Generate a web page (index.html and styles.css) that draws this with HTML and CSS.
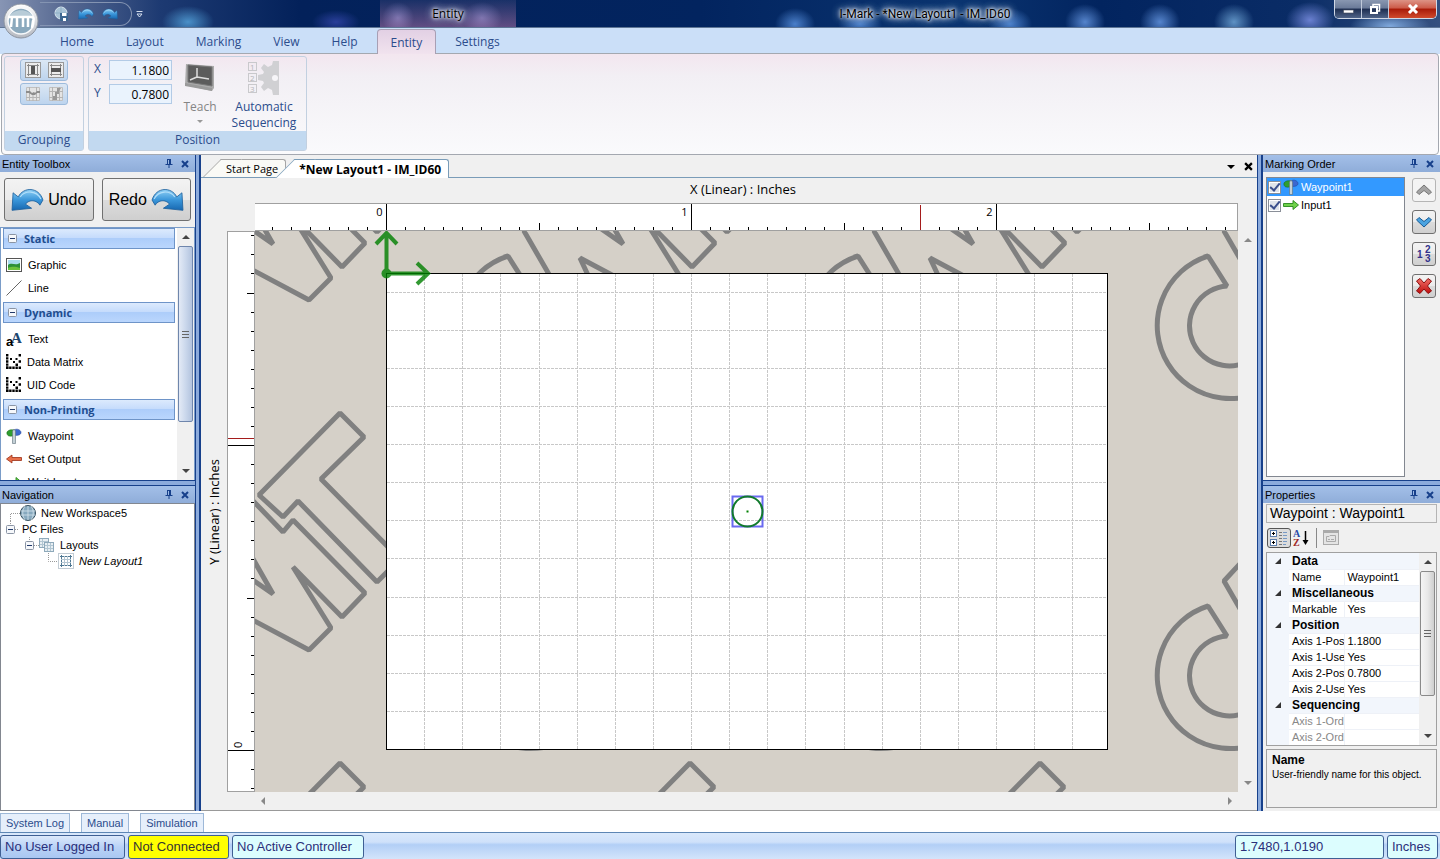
FILE: index.html
```html
<!DOCTYPE html>
<html lang="en">
<head>
  <meta charset="UTF-8" />
  <meta name="viewport" content="width=device-width, initial-scale=1.0" />
  <title>I-Mark - *New Layout1 - IM_ID60</title>
  <link rel="stylesheet" href="styles.css">
</head>
<body>
  <!-- shared icons -->
  <svg class="defs" aria-hidden="true">
    <defs>
      <linearGradient id="blueArrow" x1="0" y1="0" x2="0" y2="1">
        <stop offset="0" stop-color="#8fd0f5" />
        <stop offset="0.5" stop-color="#3a96da" />
        <stop offset="1" stop-color="#1767b0" />
      </linearGradient>
      <linearGradient id="silver" x1="0" y1="0" x2="0" y2="1">
        <stop offset="0" stop-color="#ffffff" />
        <stop offset="1" stop-color="#b4b8c0" />
      </linearGradient>
      <linearGradient id="redX" x1="0" y1="0" x2="0" y2="1">
        <stop offset="0" stop-color="#f07068" />
        <stop offset="1" stop-color="#c00c0c" />
      </linearGradient>
    </defs>
    <symbol id="i-undo" viewBox="0 0 32 24">
      <path d="M1 22 L2 5 L7 9 C12 -1 27 -1 31 12 L28 17 C25 12 18 11 14 16 L20 20 Z" fill="url(#blueArrow)" stroke="#1c5f9c" stroke-width="0.8" />
      <path d="M9 9 C14 2 25 3 29 11" fill="none" stroke="#b5e0fa" />
    </symbol>
    <symbol id="i-redo" viewBox="0 0 32 24">
      <path d="M31 22 L30 5 L25 9 C20 -1 5 -1 1 12 L4 17 C7 12 14 11 18 16 L12 20 Z" fill="url(#blueArrow)" stroke="#1c5f9c" stroke-width="0.8" />
      <path d="M23 9 C18 2 7 3 3 11" fill="none" stroke="#b5e0fa" />
    </symbol>
    <symbol id="i-pin" viewBox="0 0 8 9">
      <path d="M2.5 0.5 V5 M2 0.5 H6 M5.5 0.5 V5 M4.5 1 V5 M0.5 5.5 H7.5 M4 6 V9" fill="none" stroke="#17408b" />
    </symbol>
    <symbol id="i-close" viewBox="0 0 8 8">
      <path d="M1 1 L7 7 M7 1 L1 7" fill="none" stroke="currentColor" stroke-width="2" />
    </symbol>
    <symbol id="i-minus" viewBox="0 0 9 9">
      <rect x="0.5" y="0.5" width="8" height="8" rx="1" fill="#f6f8fb" stroke="#8a94a4" />
      <path d="M2 4.5 H7" stroke="#223a6b" />
    </symbol>
    <symbol id="i-waypoint" viewBox="0 0 16 16">
      <path d="M1 6 C0 3 4 1 8 2 V8 C5 8 2 9 1 6 Z" fill="#2f9e2f" stroke="#176117" stroke-width="0.5" />
      <path d="M8 2 C11 0 15 2 15 4.5 C15 7 11 8 8 7 Z" fill="#3c68cf" stroke="#1d3c8e" stroke-width="0.5" />
      <path d="M6.5 3 L8 1 L9.5 3 V15.5 H6.5 Z" fill="#c3d0d6" stroke="#5e7078" stroke-width="0.6" />
    </symbol>
    <symbol id="i-output" viewBox="0 0 16 16">
      <path d="M0.5 8 L6 4 V6.5 H15.5 V9.5 H6 V12 Z" fill="#e8704a" stroke="#9c2f14" stroke-width="0.8" />
    </symbol>
    <symbol id="i-input" viewBox="0 0 16 16">
      <path d="M15.5 8 L10 3.5 V6.5 H0.5 V9.5 H10 V12.5 Z" fill="#6fd24a" stroke="#27871d" stroke-width="0.9" />
    </symbol>
    <symbol id="i-matrix" viewBox="0 0 15 15">
      <path d="M1.2 0 V15" stroke="#000" stroke-width="2.4" stroke-dasharray="2.4 0.75" />
      <path d="M0 13.8 H15" stroke="#000" stroke-width="2.4" stroke-dasharray="2.4 0.75" />
      <path d="M4 4 H6 V6 H4 Z M7 7 H9 V9 H7 Z M9.5 9.5 H12 V12 H9.5 Z M12.6 0 H15 V2.400 H12.600 Z M12.600 6.300 H15 V8.700 H12.600 Z M9.500 4 H11.500 V6 H9.500 Z" />
    </symbol>
    <symbol id="i-grid" viewBox="0 0 16 16">
      <rect x="0.5" y="0.5" width="15" height="15" fill="#fff" stroke="#c2ccd4" />
      <path d="M3.5 2 V14 M12.5 2 V14 M2 3.5 H14 M2 12.5 H14" stroke="#4f7893" />
      <path d="M6.5 3 V13 M9.5 3 V13 M3 6.5 H13 M3 9.5 H13" stroke="#b4c6d2" />
    </symbol>
  </svg>

  <header class="titlebar">
    <button class="office-button" aria-label="Application menu">
      <svg width="36" height="36" viewBox="0 0 36 36">
        <circle cx="18" cy="18" r="17" fill="url(#silver)" stroke="#8b93a0" />
        <circle cx="18" cy="18" r="13" fill="#8ba9bd" stroke="#f7f9fb" stroke-width="1.5" />
        <path d="M6 14 C10 5 26 5 30 14" fill="#b8ccd8" />
        <path d="M5 14 H28 C31 14 31 16 30 18 L29 25 M9 14 L8 24 M14 14 V24 M20 14 V24 M25 14 V24" fill="none" stroke="#fff" stroke-width="2.5" />
      </svg>
    </button>
    <div class="quick-access">
      <button aria-label="Save"><svg width="16" height="16" viewBox="0 0 16 16"><circle cx="7" cy="7" r="6" fill="#a9c3d6" stroke="#d8e6f0" /><path d="M1 7 H13 M7 1 V13" stroke="#8fb0c6" fill="none" /><path d="M6 7 H14 V15 H6 Z" fill="#3e6790" /><path d="M8 7 H12.500 V10 H8 Z M9 12 H12 V15 H9 Z" fill="#fff" /></svg></button>
      <button aria-label="Undo"><svg width="16" height="14"><use href="#i-undo" /></svg></button>
      <button aria-label="Redo"><svg width="16" height="14"><use href="#i-redo" /></svg></button>
    </div>
    <button class="qa-more" aria-label="Customize"><svg width="7" height="8" viewBox="0 0 7 8"><path d="M0.5 1.5 H6.5 M1 4 H6 L3.5 7 Z" fill="none" stroke="#d5dfee" /></svg></button>
    <span class="context-title">Entity</span>
    <span class="window-title">I-Mark - *New Layout1 - IM_ID60</span>
    <div class="window-buttons">
      <button aria-label="Minimize"><svg width="11" height="10" viewBox="0 0 11 10"><rect x="0.5" y="6" width="10" height="3" fill="#fff" stroke="#444c5c" stroke-width="0.6" /></svg></button>
      <button aria-label="Restore"><svg width="12" height="12" viewBox="0 0 12 12"><path d="M4 3 V1.5 H10.5 V8 H9" fill="none" stroke="#fff" stroke-width="1.5" /><rect x="2" y="4" width="6" height="6" fill="none" stroke="#fff" stroke-width="2" /></svg></button>
      <button class="close" aria-label="Close"><svg width="12" height="10" viewBox="0 0 12 10"><path d="M2 1 L10 9 M10 1 L2 9" stroke="#fff" stroke-width="3" /></svg></button>
    </div>
  </header>

  <nav class="ribbon-tabs">
    <button>Home</button>
    <button>Layout</button>
    <button>Marking</button>
    <button>View</button>
    <button>Help</button>
    <button class="active">Entity</button>
    <button>Settings</button>
  </nav>

  <section class="ribbon">
    <div class="group grouping">
      <div class="group-body">
        <div class="button-pair">
          <button aria-label="Group columns"><svg width="16" height="16" viewBox="0 0 16 16"><rect x="0.5" y="0.5" width="15" height="15" fill="#ececec" stroke="#999" /><path d="M3.5 2 V14 M12.5 2 V14 M2 3.5 H14 M2 12.5 H14" stroke="#888" /><rect x="6" y="4" width="4" height="8" fill="#555" /></svg></button>
          <button aria-label="Group rows"><svg width="16" height="16" viewBox="0 0 16 16"><rect x="0.5" y="0.5" width="15" height="15" fill="#ececec" stroke="#999" /><path d="M3.5 2 V14 M12.5 2 V14 M2 3.5 H14 M2 12.5 H14" stroke="#888" /><rect x="3" y="6" width="10" height="4" fill="#555" /></svg></button>
        </div>
        <div class="button-pair">
          <button aria-label="Ungroup rows"><svg width="14" height="14" viewBox="0 0 14 14"><path d="M0.500 0.500 H13.500 V13.500 H0.500 Z" fill="#e4e4e4" stroke="#c0c0c0" /><path d="M3.5 0 V14 M7 7 V14 M10.500 0 V14 M0 10.500 H14" stroke="#b4b4b4" /><path d="M0 4 H4 L6 6 L8 5 L9 6 L11 4 H14 V6 H11 L9 8 H6 L3 6 H0 Z" fill="#8c8c8c" /></svg></button>
          <button aria-label="Ungroup columns"><svg width="14" height="14" viewBox="0 0 14 14"><path d="M0.500 0.500 H13.500 V13.500 H0.500 Z" fill="#e4e4e4" stroke="#c0c0c0" /><path d="M3.5 0 V14 M10.5 0 V14 M0 4.5 H14 M0 10.5 H14" stroke="#b4b4b4" /><path d="M8 1 H12 L10 4 V7 H8 V13 H4 V9 H6 V5 H8 Z" fill="#999" /></svg></button>
        </div>
      </div>
      <div class="group-label">Grouping</div>
    </div>
    <div class="group position">
      <div class="group-body">
        <div class="coords">
          <label for="posX">X</label><input type="text" id="posX" value="1.1800">
          <label for="posY">Y</label><input type="text" id="posY" value="0.7800">
        </div>
        <button class="big disabled">
          <svg width="32" height="32" viewBox="0 0 32 32"><path d="M2 2 L30 4 V26 L28 29 L1 23 Z" fill="#aaa" /><path d="M4 3 L28 5 V24 L4 20 Z" fill="#5c5c5c" stroke="#777" /><path d="M13 6 V15 L6 18 M13 15 L25 17" stroke="#ddd" fill="none" stroke-width="1.5" /><path d="M1 21 L28 26 V29 L1 24 Z" fill="#9a9a9a" /></svg>
          <span>Teach</span>
          <i class="arrow"></i>
        </button>
        <button class="big">
          <svg width="32" height="34" viewBox="0 0 32 34">
            <g fill="none" stroke="#c9c9cc"><rect x="0.5" y="1.5" width="8" height="8" /><rect x="0.5" y="12.5" width="8" height="8" /><rect x="0.5" y="23.5" width="8" height="8" /></g>
            <g class="seq-num"><text x="2" y="9">1</text><text x="2" y="20">2</text><text x="2" y="31">3</text></g>
            <path d="M31 0 V34 H25 L24 29 L20 27 L16 30 L13 26 L16 22 L15 20 L10 19 V14 L15 13 L16 11 L13 7 L16 3 L20 6 L24 4 L25 0 Z" fill="#d0d0d3" /><circle cx="27" cy="17" r="3" fill="#f6f5f8" />
          </svg>
          <span>Automatic<br>Sequencing</span>
        </button>
      </div>
      <div class="group-label">Position</div>
    </div>
  </section>

  <main class="workspace">
    <aside class="dock left">
      <section class="panel toolbox">
        <div class="panel-head"><h2>Entity Toolbox</h2><button aria-label="Pin"><svg width="8" height="9"><use href="#i-pin" /></svg></button><button aria-label="Close"><svg width="8" height="8"><use href="#i-close" /></svg></button></div>
        <div class="history">
          <button><svg width="33" height="26"><use href="#i-undo" /></svg>Undo</button>
          <button>Redo<svg width="33" height="26"><use href="#i-redo" /></svg></button>
        </div>
        <div class="tool-box">
          <div class="tool-list">
            <h3><svg width="9" height="9"><use href="#i-minus" /></svg>Static</h3>
            <ul>
              <li><svg width="16" height="14" viewBox="0 0 16 14"><rect x="0.5" y="0.5" width="15" height="13" fill="#fff" stroke="#555" /><rect x="2" y="2" width="12" height="5" fill="#a9dcef" /><path d="M2 7 C6 4 9 8 14 5 V12 H2 Z" fill="#2c9038" /><path d="M2 10 C7 8 10 9 14 10 V12 H2 Z" fill="#6cc23c" /></svg>Graphic</li>
              <li><svg width="16" height="16" viewBox="0 0 16 16"><path d="M0.5 15.5 L15.5 0.5" stroke="#666" /></svg>Line</li>
            </ul>
            <h3><svg width="9" height="9"><use href="#i-minus" /></svg>Dynamic</h3>
            <ul>
              <li><svg width="16" height="16" viewBox="0 0 16 16"><text class="big-a" x="5" y="12">A</text><text class="small-a" x="0" y="15">a</text></svg>Text</li>
              <li><svg width="15" height="15"><use href="#i-matrix" /></svg>Data Matrix</li>
              <li><svg width="15" height="15"><use href="#i-matrix" /></svg>UID Code</li>
            </ul>
            <h3><svg width="9" height="9"><use href="#i-minus" /></svg>Non-Printing</h3>
            <ul>
              <li><svg width="16" height="16"><use href="#i-waypoint" /></svg>Waypoint</li>
              <li><svg width="16" height="16"><use href="#i-output" /></svg>Set Output</li>
              <li><svg width="16" height="16"><use href="#i-input" /></svg>Wait Input</li>
            </ul>
          </div>
          <div class="scrollbar blue"><i class="up"></i><div class="thumb"></div><i class="down"></i></div>
        </div>
      </section>

      <section class="panel navigation">
        <div class="panel-head"><h2>Navigation</h2><button aria-label="Pin"><svg width="8" height="9"><use href="#i-pin" /></svg></button><button aria-label="Close"><svg width="8" height="8"><use href="#i-close" /></svg></button></div>
        <ul class="tree">
          <li><svg width="36" height="16" viewBox="0 0 36 16"><path d="M9.5 16 V8.5 H19" fill="none" stroke="#999" stroke-dasharray="1 1" /><circle cx="27" cy="8" r="7.5" fill="#87a9be" stroke="#37505f" /><path d="M20 6 H34 M20 10 H34 M27 1 V15 M24 1 C21 5 21 11 24 15 M30 1 C33 5 33 11 30 15" fill="none" stroke="#d5e5ee" stroke-width="0.8" /></svg>New Workspace5</li>
          <li><svg width="17" height="16" viewBox="0 0 17 16"><path d="M9.5 0 V4 M14 8.500 H17" stroke="#999" stroke-dasharray="1 1" /><use href="#i-minus" x="5" y="4" width="9" height="9" /></svg>PC Files</li>
          <li><svg width="55" height="16" viewBox="0 0 55 16"><path d="M28.5 0 V4 M33 8.5 H39" stroke="#999" stroke-dasharray="1 1" /><use href="#i-minus" x="24" y="4" width="9" height="9" /><g fill="#e8eff3" stroke="#8ea9ba"><rect x="38.5" y="1.5" width="9" height="9" /><rect x="43.5" y="5.5" width="9" height="9" /></g><path d="M46.5 6 V14 M49.5 6 V14 M44 8.5 H52 M44 11.5 H52 M41.500 2 V10 M39 4.5 H47 M39 7.5 H43" stroke="#b2c6d2" /></svg>Layouts</li>
          <li class="current"><svg width="73" height="16" viewBox="0 0 73 16"><path d="M47.5 0 V8.5 H57" fill="none" stroke="#999" stroke-dasharray="1 1" /><use href="#i-grid" x="57" y="0" width="16" height="16" /></svg>New Layout1</li>
        </ul>
      </section>
    </aside>

    <div class="splitter"></div>

    <section class="document">
      <div class="doc-tabs">
        <button class="doc-tab">Start Page</button>
        <button class="doc-tab active">*New Layout1 - IM_ID60</button>
        <button class="doc-menu" aria-label="Open documents"><i class="arrow"></i></button>
        <button class="doc-close" aria-label="Close document"><svg width="9" height="9"><use href="#i-close" /></svg></button>
      </div>
      <div class="doc-body">
        <div class="axis-x">X (Linear) : Inches</div>
        <div class="axis-y"><span>Y (Linear) : Inches</span></div>
        <svg class="ruler-x" id="rulerX"></svg>
        <svg class="ruler-y" id="rulerY"></svg>
        <svg class="canvas" id="canvas">
          <defs>
            <g id="mark" class="mark">
              <path d="M85 182 L109 206 L66 248 L145 328 L122 351 L43 270 L28 286 L4 264 Z" />
              <path d="M-20 251 L28 301 L38 289 L110 362 L87 386 L38 336 L76 397 L54 419 L-25 377 L-5 420" />
              <path d="M-15 305 L18 363 L-25 333" />
              <path d="M-97 375 A73 73 0 1 0 -23 496 L-47 473 A40 40 0 1 1 -78 405 Z" />
              <path d="M-45 311 L-81 350 L-40 421" />
            </g>
          </defs>
          <g id="marks"></g>
          <rect class="sheet" x="131.5" y="42.5" width="721" height="476" />
          <g id="grid" class="grid"></g>
          <g class="origin">
            <path d="M131.5 42.5 V3 M121 13 L131.5 2 L142 13" />
            <path d="M131.5 42.5 H171 M162 32 L173 42.5 L162 53" />
            <circle cx="131.5" cy="42.5" r="5" />
          </g>
          <rect class="selection" x="477.5" y="265.5" width="30" height="30" />
          <circle class="waypoint" cx="492.5" cy="280.5" r="15" />
          <rect x="492" y="280" width="1" height="1" fill="#008000" stroke="#008000" />
        </svg>
        <div class="scroll-v"><i class="up"></i><i class="down"></i></div>
        <div class="scroll-h"><i class="prev"></i><i class="next"></i></div>
      </div>
    </section>

    <div class="splitter"></div>

    <aside class="dock right">
      <section class="panel marking">
        <div class="panel-head"><h2>Marking Order</h2><button aria-label="Pin"><svg width="8" height="9"><use href="#i-pin" /></svg></button><button aria-label="Close"><svg width="8" height="8"><use href="#i-close" /></svg></button></div>
        <div class="marking-body">
          <div class="order-list">
            <label class="selected"><input type="checkbox" checked><svg width="16" height="16"><use href="#i-waypoint" /></svg>Waypoint1</label>
            <label><input type="checkbox" checked><svg width="16" height="16"><use href="#i-input" /></svg>Input1</label>
          </div>
          <div class="order-buttons">
            <button class="off" aria-label="Move up"><svg width="18" height="18" viewBox="0 0 18 18"><path d="M1.500 11 L9 4 L16.500 11 L14 13.500 L9 9.500 L4 13.500 Z" fill="#a4a4a4" stroke="#777" /></svg></button>
            <button aria-label="Move down"><svg width="18" height="18" viewBox="0 0 18 18"><path d="M1.500 7 L4 4.500 L9 8.500 L14 4.500 L16.500 7 L9 14 Z" fill="#4aa3e0" stroke="#175a94" /></svg></button>
            <button aria-label="Renumber"><svg class="renumber" width="18" height="18" viewBox="0 0 18 18"><text x="2" y="13">1</text><text x="10" y="8">2</text><text x="10" y="17">3</text></svg></button>
            <button aria-label="Delete"><svg width="18" height="18" viewBox="0 0 18 18"><path d="M1.500 4 L5 1.500 L9 6 L13 1.500 L16.500 4 L12.500 9 L16.500 14 L13 16.500 L9 12 L5 16.500 L1.500 14 L5.500 9 Z" fill="url(#redX)" stroke="#8c1010" /></svg></button>
          </div>
        </div>
      </section>

      <section class="panel properties">
        <div class="panel-head"><h2>Properties</h2><button aria-label="Pin"><svg width="8" height="9"><use href="#i-pin" /></svg></button><button aria-label="Close"><svg width="8" height="8"><use href="#i-close" /></svg></button></div>
        <div class="object-name">Waypoint : Waypoint1</div>
        <div class="prop-tools">
          <button class="on" aria-label="Categorized"><svg width="18" height="16" viewBox="0 0 18 16"><g fill="#fff" stroke="#5e7fae"><rect x="0.5" y="0.5" width="6" height="6" /><rect x="0.5" y="9.5" width="6" height="6" /></g><path d="M2 3.5 H5 M3.5 2 V5 M2 12.5 H5 M3.5 11 V14" stroke="#000" /><path d="M9 2.5 H12 M9 5.5 H12 M9 8.5 H12 M9 11.5 H12 M9 14.5 H12" stroke="#777" /><path d="M13 2.5 H17 M13 5.5 H17 M13 8.5 H17 M13 11.5 H17 M13 14.5 H16" stroke="#7799c4" /></svg></button>
          <button aria-label="Alphabetical"><svg class="az" width="16" height="18" viewBox="0 0 16 18"><text x="0" y="8" fill="#2a4aa8">A</text><text x="0" y="17" fill="#a02828">Z</text><path d="M12.5 2 V13" stroke="#000" stroke-width="1.5" /><path d="M9.5 11 H15.5 L12.5 16 Z" /></svg></button>
          <span class="sep"></span>
          <button aria-label="Property pages" disabled><svg width="16" height="15" viewBox="0 0 16 15"><rect x="0.5" y="0.5" width="15" height="14" fill="#e4e4e4" stroke="#aaa" /><path d="M0 2 H16" stroke="#aaa" stroke-width="2" /><path d="M3.5 6.5 H6 L7 5.5 H12.5 V11.5 H3.5 Z M5 9.5 H7 M8 9.5 H11" fill="none" stroke="#aaa" /></svg></button>
        </div>
        <div class="prop-grid">
          <table>
            <colgroup><col class="col-gutter"><col class="col-name"><col></colgroup>
            <tr class="cat"><td><i></i></td><th colspan="2">Data</th></tr>
            <tr><td></td><th>Name</th><td>Waypoint1</td></tr>
            <tr class="cat"><td><i></i></td><th colspan="2">Miscellaneous</th></tr>
            <tr><td></td><th>Markable</th><td>Yes</td></tr>
            <tr class="cat"><td><i></i></td><th colspan="2">Position</th></tr>
            <tr><td></td><th>Axis 1-Posi</th><td>1.1800</td></tr>
            <tr><td></td><th>Axis 1-Use</th><td>Yes</td></tr>
            <tr><td></td><th>Axis 2-Posi</th><td>0.7800</td></tr>
            <tr><td></td><th>Axis 2-Use</th><td>Yes</td></tr>
            <tr class="cat"><td><i></i></td><th colspan="2">Sequencing</th></tr>
            <tr class="dim"><td></td><th>Axis 1-Orde</th><td></td></tr>
            <tr class="dim"><td></td><th>Axis 2-Orde</th><td></td></tr>
          </table>
          <div class="scrollbar"><i class="up"></i><div class="thumb"></div><i class="down"></i></div>
        </div>
        <div class="prop-help">
          <strong>Name</strong>
          <p>User-friendly name for this object.</p>
        </div>
      </section>
    </aside>
  </main>

  <nav class="log-tabs">
    <button>System Log</button>
    <button>Manual</button>
    <button>Simulation</button>
  </nav>

  <footer class="status">
    <span class="cell user">No User Logged In</span>
    <span class="cell warn">Not Connected</span>
    <span class="cell controller">No Active Controller</span>
    <span class="cell coord">1.7480,1.0190</span>
    <span class="cell unit">Inches</span>
  </footer>

  <script>
    const NS = 'http://www.w3.org/2000/svg';
    const INCH = 305;
    const ORIGIN_X = 131;
    const ORIGIN_Y = 519;

    function add(parent, tag, attrs, text) {
      const el = document.createElementNS(NS, tag);
      for (const key in attrs) el.setAttribute(key, attrs[key]);
      if (text) el.textContent = text;
      parent.appendChild(el);
    }

    // ticks are 1/16 inch apart, longer at each half and full inch
    function tickLength(i) {
      if (i % 16 === 0) return 27;
      return i % 8 === 0 ? 8 : 4;
    }

    const rulerX = document.getElementById('rulerX');
    const rulerWidth = rulerX.getBoundingClientRect().width;
    for (let i = -6; ORIGIN_X + i * INCH / 16 < rulerWidth; i++) {
      const x = Math.round(ORIGIN_X + i * INCH / 16) + 0.5;
      add(rulerX, 'path', { d: `M${x} 27 V${27 - tickLength(i)}`, class: 'tick' });
      if (i % 16 === 0) add(rulerX, 'text', { x: x - 4, y: 12, 'text-anchor': 'end' }, String(i / 16));
    }
    add(rulerX, 'path', { d: 'M665.5 1 V27', class: 'cursor' });

    const rulerY = document.getElementById('rulerY');
    for (let i = -2; i <= 27; i++) {
      const y = Math.round(ORIGIN_Y - 1 - i * INCH / 16) + 0.5;
      add(rulerY, 'path', { d: `M27 ${y} H${27 - tickLength(i)}`, class: 'tick' });
    }
    add(rulerY, 'text', { transform: 'translate(14 516) rotate(-90)' }, '0');
    add(rulerY, 'path', { d: 'M0 206.5 H27', class: 'cursor' });

    const marks = document.getElementById('marks');
    for (let row = -1; row <= 1; row++) {
      for (let col = 0; col <= 3; col++) {
        add(marks, 'use', { href: '#mark', x: col * 350, y: row * 350 });
      }
    }

    const grid = document.getElementById('grid');
    for (let i = 1; i < 19; i++) {
      const x = Math.round(ORIGIN_X + i * INCH / 8) + 0.5;
      add(grid, 'path', { d: `M${x} 43 V518` });
    }
    for (let i = 1; i <= 12; i++) {
      const y = Math.round(ORIGIN_Y - 1 - i * INCH / 8) + 0.5;
      add(grid, 'path', { d: `M132 ${y} H852` });
    }
  </script>
</body>
</html>
```
FILE: styles.css
```css
* {
  box-sizing: border-box;
}

body {
  margin: 0;
  height: 100vh;
  display: flex;
  flex-direction: column;
  overflow: hidden;
  background: #fff;
  color: #000;
  font-family: "Liberation Sans", Arial, sans-serif;
  font-size: 11px;
}

button {
  margin: 0;
  padding: 0;
  border: none;
  background: none;
  color: inherit;
  font: inherit;
}

h2, h3, p, ul {
  margin: 0;
  padding: 0;
  font-size: 11px;
  font-weight: normal;
}

ul {
  list-style: none;
}

svg {
  display: block;
  flex: none;
}

.defs {
  position: absolute;
  width: 0;
  height: 0;
}

/* title bar */
.titlebar {
  position: relative;
  flex: none;
  display: flex;
  height: 28px;
  border-bottom: 1px solid #5f7796;
  background:
    radial-gradient(ellipse 26px 16px at 188px 22px, #4a90c8, transparent),
    radial-gradient(ellipse 24px 12px at 336px 22px, #2a3f9a, transparent),
    radial-gradient(ellipse 16px 16px at 398px 18px, #6a7fc0, transparent),
    radial-gradient(ellipse 20px 16px at 482px 18px, #6a7fc0, transparent),
    radial-gradient(ellipse 20px 16px at 795px 24px, #4a7fca, transparent),
    radial-gradient(ellipse 22px 14px at 860px 24px, #4a7fca, transparent),
    radial-gradient(ellipse 22px 16px at 1010px 24px, #4a7fca, transparent),
    radial-gradient(ellipse 20px 18px at 1085px 22px, #5584cc, transparent),
    radial-gradient(ellipse 20px 18px at 1160px 22px, #5584cc, transparent),
    radial-gradient(ellipse 20px 18px at 1234px 22px, #5f92c4, transparent),
    radial-gradient(ellipse 24px 18px at 1310px 20px, #6a80d0, transparent),
    radial-gradient(ellipse 40px 14px at 1390px 26px, #7fa8dc, transparent),
    linear-gradient(90deg, #8795b4 0, #5a6c94 60px, #1d3a72 160px, #03215a 300px, #02245f 700px, #0a3470 960px, #02245f 1100px, #0a2c66 1300px, #34507f 100%);
}

.office-button {
  position: absolute;
  left: 3px;
  top: 3px;
  z-index: 2;
}

.quick-access {
  display: flex;
  align-items: center;
  gap: 8px;
  width: 92px;
  height: 24px;
  margin: 2px 0 0 40px;
  padding-left: 14px;
  border: 1px solid #8494b2;
  border-left: none;
  border-radius: 0 12px 12px 0;
}

.qa-more {
  align-self: center;
  margin-left: 4px;
}

.context-title,
.window-title {
  font-size: 12px;
  line-height: 28px;
  text-shadow: 0 0 3px #fff, 0 0 5px #fff, 0 0 8px #cfdcf0, 0 0 10px #cfdcf0;
}

.context-title {
  width: 136px;
  margin-left: 237px;
  text-align: center;
  font-family: "Open Sans", "Noto Sans", sans-serif;
  background: linear-gradient(rgba(60, 70, 120, 0.4), rgba(190, 120, 170, 0.5));
}

.window-title {
  flex: 1;
  text-align: center;
  font-family: Roboto, "Open Sans", sans-serif;
}

.window-buttons {
  display: flex;
  height: 19px;
  margin-right: 3px;
  border: 1px solid #d0d8e6;
  border-top: none;
  border-radius: 0 0 5px 5px;
  overflow: hidden;
}

.window-buttons button {
  display: grid;
  place-items: center;
  width: 27px;
  border-right: 1px solid #c0c9da;
  background: linear-gradient(#8997b1, #6a7a98 45%, #1d2d50 50%, #506488);
}

.window-buttons .close {
  width: 47px;
  border: none;
  background: linear-gradient(#dd9385, #cc5a48 45%, #a81a08 50%, #d04a2c);
}

/* ribbon */
.ribbon-tabs {
  flex: none;
  display: flex;
  height: 26px;
  padding: 1px 0 0 44px;
  background: #cbdff8;
  color: #2b4c8c;
  font-family: "Open Sans", "Noto Sans", sans-serif;
  font-size: 12px;
}

.ribbon-tabs button {
  padding: 0 16px;
}

.ribbon-tabs .active {
  position: relative;
  z-index: 1;
  height: 25px;
  margin: 0 3px;
  padding: 0 13px;
  border: 1px solid #a89fb4;
  border-bottom: none;
  border-radius: 4px 4px 0 0;
  background: linear-gradient(#e2d0e4, #f1e3ee);
}

.ribbon {
  flex: none;
  display: flex;
  gap: 4px;
  height: 102px;
  margin: -1px 1px 0;
  padding: 2px;
  border: 1px solid #a4a8b0;
  border-radius: 4px;
  background: linear-gradient(#f3e6ef, #f2eff4 22%, #fafafc);
  color: #2b4c8c;
  font-family: "Open Sans", "Noto Sans", sans-serif;
  font-size: 12px;
}

.group {
  display: flex;
  flex-direction: column;
  height: 95px;
  border: 1px solid #c2d0e0;
  border-radius: 3px;
}

.grouping {
  width: 80px;
}

.position {
  width: 219px;
}

.group-body {
  flex: 1;
  padding: 2px 0 0;
}

.group-label {
  height: 19px;
  background: #c2d9f0;
  line-height: 18px;
  text-align: center;
}

.button-pair {
  display: flex;
  justify-content: space-around;
  align-items: center;
  width: 48px;
  height: 22px;
  margin: 0 auto 2px;
  border: 1px solid #9dbbdc;
  border-radius: 3px;
  background: linear-gradient(#dbe7f4, #bdd4ee);
}

.position .group-body {
  display: flex;
}

.coords {
  display: grid;
  grid-template-columns: 15px 63px;
  grid-auto-rows: 20px;
  gap: 4px 0;
  padding: 1px 0 0 5px;
}

.coords input {
  width: 63px;
  padding: 0 2px;
  border: 1px solid #b3cbe6;
  background: #eaf3fd;
  color: #000;
  font: inherit;
  text-align: right;
}

.big {
  display: flex;
  flex-direction: column;
  align-items: center;
  width: 56px;
  color: #2b4c8c;
  line-height: 16px;
}

.big + .big {
  width: 72px;
}

.big svg {
  height: 34px;
  margin: 2px 0 4px;
}

.big.disabled {
  color: #858585;
}

.big.disabled .arrow {
  margin-top: 5px;
  border-top-color: #999;
  border-width: 3px;
}

.seq-num text {
  fill: #b4b4b8;
  font-size: 8px;
}

.arrow {
  display: block;
  width: 0;
  height: 0;
  border: 4px solid transparent;
  border-bottom: none !important;
  border-top-color: #000;
}

/* docked layout */
.workspace {
  flex: 1;
  min-height: 0;
  display: grid;
  grid-template-columns: 195px 6px minmax(0, 1fr) 6px 177px;
}

.splitter {
  border: solid #17408b;
  border-width: 0 2px 0 1px;
  background: #8cabdc;
}

.dock {
  display: flex;
  flex-direction: column;
  gap: 4px;
  min-width: 0;
  min-height: 0;
  background: #8cabdc;
}

.panel {
  display: flex;
  flex-direction: column;
  min-height: 0;
  background: #f0f0f0;
}

.panel + .panel {
  flex: 1;
  border-top: 1px solid #17408b;
}

.toolbox,
.marking {
  flex: 0 0 326px;
  border-bottom: 1px solid #17408b;
}

.panel-head {
  flex: none;
  display: flex;
  align-items: center;
  gap: 8px;
  height: 17px;
  padding: 0 6px 0 2px;
  background: linear-gradient(#a3bfe8, #8fadd9);
  color: #000;
}

.panel-head h2 {
  flex: 1;
}

.panel-head button {
  color: #17408b;
}

/* toolbox */
.history {
  display: flex;
  gap: 8px;
  padding: 6px 4px 6px;
}

.history button {
  flex: 1;
  display: flex;
  align-items: center;
  justify-content: center;
  gap: 4px;
  height: 43px;
  border: 1px solid #707070;
  border-radius: 3px;
  background: linear-gradient(#f3f3f3, #ebebeb 50%, #dcdcdc 51%, #cfcfcf);
  font-size: 16px;
}

.tool-box {
  flex: 1;
  display: flex;
  min-height: 0;
  border: solid #7a9cc8;
  border-width: 1px 1px 0 1px;
  background: #fff;
}

.tool-list {
  flex: 1;
  padding-left: 2px;
  overflow: hidden;
}

.tool-list h3 {
  display: flex;
  align-items: center;
  gap: 7px;
  width: 172px;
  height: 21px;
  padding-left: 4px;
  border: 1px solid #6e94c8;
  background: linear-gradient(#dceafd, #c6dcfc 45%, #adcdfa 50%, #bad6fd);
  color: #1f4d8f;
  font-family: "Open Sans", "Noto Sans", sans-serif;
  font-weight: bold;
}

.tool-list ul {
  padding: 4px 0 3px 3px;
}

.tool-list li {
  display: flex;
  align-items: center;
  gap: 6px;
  height: 23px;
}

.big-a {
  fill: #1b466e;
  font: bold 15px "Liberation Serif", serif;
}

.small-a {
  font: bold 13px "Liberation Sans", sans-serif;
}

.scrollbar {
  flex: none;
  display: flex;
  flex-direction: column;
  align-items: center;
  width: 17px;
  background: #f0f0f0;
}

.up, .down {
  flex: none;
  width: 0;
  height: 0;
  border: 4px solid transparent;
}

.up {
  margin: 7px 0;
  border-top: none;
  border-bottom-color: #444;
}

.down {
  margin: auto 0 7px;
  border-bottom: none;
  border-top-color: #444;
}

.thumb {
  display: grid;
  place-items: center;
  width: 15px;
  height: 125px;
  border: 1px solid #8a8a8a;
  border-radius: 2px;
  background: linear-gradient(90deg, #f4f4f4, #e8e8e8 50%, #cfcfcf);
}

.thumb::before {
  content: "";
  width: 7px;
  height: 7px;
  background: repeating-linear-gradient(#666 0 1px, transparent 1px 3px);
}

.blue .thumb {
  height: 176px;
  border-color: #6f86ac;
  background: linear-gradient(90deg, #e3eaf6, #cbd8ec 50%, #b2c3de);
}

/* navigation tree */
.tree {
  flex: 1;
  padding-top: 1px;
  border: 1px solid #828790;
  background: #fff;
}

.tree li {
  display: flex;
  align-items: center;
  gap: 4px;
  height: 16px;
}

.tree .current {
  gap: 5px;
  font-style: italic;
}

/* document area */
.document {
  display: flex;
  flex-direction: column;
  min-width: 0;
  padding-top: 1px;
  background: #f0f0f0;
  border-bottom: 1px solid #999;
}

.doc-tabs {
  flex: none;
  display: flex;
  align-items: flex-end;
  height: 22px;
  border-bottom: 1px solid #7a9cb8;
  font-family: "Open Sans", "Noto Sans", sans-serif;
}

.doc-tab {
  position: relative;
  z-index: 0;
  height: 18px;
  margin-left: 21px;
  padding: 0 7px 0 4px;
  border: solid #a5a5a5;
  border-width: 1px 1px 0 0;
  border-radius: 0 3px 0 0;
  background: #fafaf6;
}

.doc-tab::before {
  content: "";
  position: absolute;
  z-index: -1;
  inset: -1px auto 0 -10px;
  width: 20px;
  border: solid #a5a5a5;
  border-width: 1px 0 0 1px;
  background: inherit;
  transform: skewX(-45deg);
}

.doc-tab.active {
  height: 19px;
  margin: 0 auto -1px 9px;
  padding: 0 7px 0 4px;
  border-color: #7a9cb8;
  background: #fff;
  font-size: 12px;
  font-weight: bold;
}

.doc-tab.active::before {
  border-color: #7a9cb8;
}

.doc-menu,
.doc-close {
  align-self: center;
  margin-right: 9px;
}

.doc-close {
  margin-right: 4px;
}

.doc-body {
  flex: 1;
  min-height: 0;
  display: grid;
  grid-template-columns: 26px 28px minmax(0, 1fr) 19px;
  grid-template-rows: 25px 28px minmax(0, 1fr) 18px;
}

.axis-x {
  grid-column: 1 / 5;
  padding-left: 28px;
  text-align: center;
  line-height: 22px;
}

.axis-x,
.axis-y {
  font-family: "Open Sans", "Noto Sans", sans-serif;
  font-size: 13px;
}

.axis-y {
  grid-column: 1;
  grid-row: 3;
  display: grid;
  place-items: center;
}

.axis-y span {
  writing-mode: vertical-rl;
  transform: rotate(180deg);
}

.ruler-x,
.ruler-y {
  width: 100%;
  height: 100%;
  border: 1px solid #a0a0a0;
  background: #fff;
  font-family: "Open Sans", sans-serif;
  font-size: 11px;
}

.ruler-x {
  grid-column: 3;
  grid-row: 2;
  border-left: none;
}

.ruler-y {
  grid-column: 2;
  grid-row: 3;
}

.tick {
  stroke: #000;
}

.cursor {
  stroke: #a51c1c;
}

.canvas {
  grid-column: 3;
  grid-row: 3;
  width: 100%;
  height: 100%;
  background: #d5d0c8;
}

.mark {
  fill: none;
  stroke: #808080;
  stroke-width: 5;
  stroke-linejoin: bevel;
}

.sheet {
  fill: #fff;
  stroke: #000;
}

.grid {
  stroke: #c8c8c8;
  stroke-dasharray: 3 1;
}

.origin {
  fill: none;
  stroke: #008000;
  stroke-width: 4;
  opacity: 0.8;
}

.origin circle {
  fill: #008000;
  stroke: none;
}

.selection {
  fill: none;
  stroke: #6a6af0;
  stroke-width: 2;
}

.waypoint {
  fill: none;
  stroke: #117a2c;
  stroke-width: 2;
}

.scroll-v {
  display: flex;
  flex-direction: column;
  align-items: center;
  grid-column: 4;
  grid-row: 3;
}

.scroll-h {
  display: flex;
  justify-content: space-between;
  align-items: center;
  grid-column: 3;
  grid-row: 4;
  padding: 0 6px;
}

.scroll-v .up {
  border-bottom-color: #888;
}

.scroll-v .down {
  border-top-color: #888;
}

.prev, .next {
  border: 4px solid transparent;
}

.prev {
  border-left: none;
  border-right-color: #888;
}

.next {
  border-right: none;
  border-left-color: #888;
}

/* marking order */
.marking-body {
  flex: 1;
  display: flex;
  gap: 7px;
  padding: 5px 4px 3px 3px;
}

.order-list {
  flex: 1;
  border: 1px solid #828790;
  background: #fff;
}

.order-list label {
  display: flex;
  align-items: center;
  gap: 2px;
  height: 18px;
  padding-left: 1px;
}

.order-list .selected {
  background: #3399ff;
  color: #fff;
}

.order-list input {
  appearance: none;
  display: grid;
  place-items: center;
  width: 13px;
  height: 13px;
  margin: 0;
  border: 1px solid #8a8f98;
  outline: 1px solid #fff;
  outline-offset: -2px;
  background: #dfe4ea;
}

.order-list input:checked::before {
  content: "";
  width: 4px;
  height: 8px;
  margin-top: -2px;
  border: solid #3a4f8c;
  border-width: 0 2px 2px 0;
  transform: rotate(40deg);
}

.order-buttons {
  display: flex;
  flex-direction: column;
  gap: 8px;
  padding-top: 1px;
}

.order-buttons button {
  display: grid;
  place-items: center;
  width: 24px;
  height: 24px;
  border: 1px solid #707070;
  border-radius: 3px;
  background: linear-gradient(#f3f3f3, #ebebeb 50%, #dcdcdc 51%, #cfcfcf);
}

.order-buttons .off {
  border-color: #b5b5b5;
  background: #f4f4f4;
}

.renumber text {
  fill: #33338c;
  font: bold 10px "Liberation Sans", sans-serif;
}

/* properties */
.object-name {
  height: 19px;
  margin: 1px 3px 0;
  padding-left: 3px;
  border: 1px solid #b4b4b4;
  font-size: 14px;
  line-height: 17px;
}

.prop-tools {
  flex: none;
  display: flex;
  align-items: center;
  gap: 2px;
  height: 29px;
  padding: 0 4px;
}

.prop-tools .on {
  padding: 1px 2px;
  border: 1px solid #555;
  border-radius: 3px;
  background: #dcdcdc;
}

.az text {
  font: bold 10px "Liberation Serif", serif;
}

.sep {
  width: 1px;
  height: 20px;
  margin: 0 4px 0 5px;
  background: #888;
}

.prop-grid {
  flex: 1;
  display: flex;
  min-height: 0;
  margin: 0 3px;
  border: 1px solid #a0a0a0;
  background: #fff;
  overflow: hidden;
}

.prop-grid table {
  flex: 1;
  align-self: flex-start;
  table-layout: fixed;
  width: 0;
  border-collapse: collapse;
}

.col-gutter {
  width: 22px;
}

.col-name {
  width: 55px;
}

.prop-grid td,
.prop-grid th {
  height: 16px;
  padding: 0 0 0 3px;
  border-bottom: 1px solid #eef1f7;
  overflow: hidden;
  line-height: 14px;
  text-align: left;
  font-weight: normal;
  white-space: nowrap;
}

.prop-grid td:first-child {
  padding: 0;
  border: none;
  background: #f2f6fc;
}

.prop-grid tr:not(.cat) th {
  border-right: 1px solid #eef1f7;
}

.prop-grid .cat th {
  background: #f2f6fc;
  font-weight: bold;
  font-size: 12px;
}

.prop-grid .cat i {
  display: block;
  width: 0;
  height: 0;
  margin-left: 8px;
  border-left: 6px solid transparent;
  border-bottom: 6px solid #333;
}

.prop-grid .dim {
  color: #888;
}

.prop-help {
  flex: none;
  height: 59px;
  margin: 3px;
  padding: 3px 5px;
  border: 1px solid #a0a0a0;
}

.prop-help strong {
  display: block;
  font-size: 12px;
  line-height: 14px;
}

.prop-help p {
  font-size: 10px;
  line-height: 15px;
  white-space: nowrap;
}

/* bottom bars */
.log-tabs {
  flex: none;
  display: flex;
  align-items: flex-end;
  gap: 11px;
  height: 22px;
  border-bottom: 1px solid #5d86b4;
}

.log-tabs button {
  height: 19px;
  padding: 0 5px;
  border: 1px solid #9db8d8;
  border-bottom: none;
  background: #e6effb;
  color: #2b4c8c;
}

.status {
  flex: none;
  display: flex;
  gap: 3px;
  height: 26px;
  padding: 2px 2px 0 0;
  background: linear-gradient(#d9e8fb, #cfe1fa 35%, #b2cff6 45%, #d3e4fb);
  color: #2a2f7a;
  font-size: 13px;
}

.cell {
  padding: 0 4px;
  border: 1px solid #3f5f94;
  border-radius: 3px;
  background: #dcfdfe;
  line-height: 22px;
}

.user {
  width: 125px;
  background: linear-gradient(#dce9fb, #b9d2f6 50%, #a9c7f2);
}

.warn {
  width: 101px;
  background: #ffff00;
  color: #333;
}

.controller {
  width: 132px;
}

.coord {
  width: 149px;
  margin-left: auto;
}

.unit {
  width: 51px;
}
```
